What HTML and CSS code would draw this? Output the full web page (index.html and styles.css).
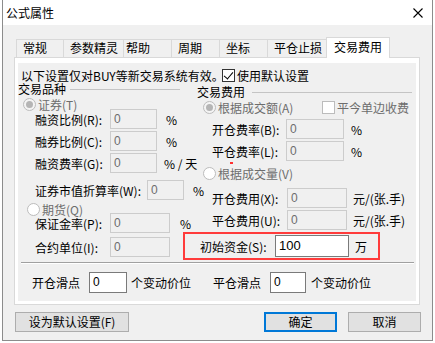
FILE: index.html
```html
<!DOCTYPE html>
<html lang="zh-CN">

<head>
    <meta charset="UTF-8">
    <title>公式属性</title>
    <link rel="stylesheet" href="styles.css">
</head>

<body>
    <div class="window">
        <div class="titlebar">
            <span class="title">公式属性</span>
            <svg class="close" width="10" height="10" viewBox="0 0 10 10">
                <path d="M0.5 0.5 L9.5 9.5 M9.5 0.5 L0.5 9.5" stroke="#000" stroke-width="1.1" fill="none" />
            </svg>
        </div>

        <div class="dialog">
            <div class="tabs">
                <div class="tab" style="width:48px">常规</div>
                <div class="tab" style="width:61px">参数精灵</div>
                <div class="tab tab-tight" style="width:49px">帮助</div>
                <div class="tab" style="width:49px">周期</div>
                <div class="tab" style="width:49px">坐标</div>
                <div class="tab" style="width:60px">平仓止损</div>
                <div class="tab active" style="width:64px">交易费用</div>
            </div>

            <div class="panel">
                <div class="page">
                    <div class="note-row">
                        <span class="note-text">以下设置仅对BUY等新交易系统有效。</span>
                        <span class="check checked"></span>
                        <span>使用默认设置</span>
                    </div>

                    <div class="cols">
                        <!-- 交易品种 -->
                        <div class="col-left">
                            <div class="legend">
                                <span>交易品种</span>
                                <span class="legend-line"></span>
                            </div>
                            <div class="radio-row first">
                                <span class="radio on"></span>
                                <span class="off-text">证券(T)</span>
                            </div>
                            <div class="field gap2">
                                <span class="lbl" style="width:75px">融资比例(R):</span>
                                <span class="box dis" style="width:47px">0</span>
                                <span class="unit" style="margin-left:9px">%</span>
                            </div>
                            <div class="field gap2">
                                <span class="lbl" style="width:75px">融券比例(C):</span>
                                <span class="box dis" style="width:47px">0</span>
                                <span class="unit" style="margin-left:9px">%</span>
                            </div>
                            <div class="field gap7">
                                <span class="lbl" style="width:75px">融资费率(G):</span>
                                <span class="box dis" style="width:47px">0</span>
                                <span class="unit" style="margin-left:7px">% / 天</span>
                            </div>
                            <div class="field">
                                <span class="lbl" style="width:112px">证券市值折算率(W):</span>
                                <span class="box dis" style="width:37px">0</span>
                                <span class="unit" style="margin-left:9px">%</span>
                            </div>
                            <div class="radio-row second">
                                <span class="radio"></span>
                                <span class="off-text">期货(Q)</span>
                            </div>
                            <div class="field gap4">
                                <span class="lbl" style="width:75px">保证金率(P):</span>
                                <span class="box dis" style="width:60px">0</span>
                                <span class="unit" style="margin-left:10px">%</span>
                            </div>
                            <div class="field">
                                <span class="lbl" style="width:75px">合约单位(I):</span>
                                <span class="box dis" style="width:60px">0</span>
                            </div>
                        </div>

                        <!-- 交易费用 -->
                        <div class="col-right">
                            <div class="legend">
                                <span>交易费用</span>
                                <span class="legend-line"></span>
                            </div>
                            <div class="radio-row">
                                <span class="radio on"></span>
                                <span class="off-text radio-label">根据成交额(A)</span>
                                <span class="check dis"></span>
                                <span class="off-text">平今单边收费</span>
                            </div>
                            <div class="field">
                                <span class="lbl" style="width:74px">开仓费率(B):</span>
                                <span class="box dis" style="width:58px">0</span>
                                <span class="unit" style="margin-left:7px">%</span>
                            </div>
                            <div class="field">
                                <span class="lbl" style="width:74px">平仓费率(L):</span>
                                <span class="box dis" style="width:58px">0</span>
                                <span class="unit" style="margin-left:7px">%</span>
                            </div>
                            <div class="red-mark"></div>
                            <div class="radio-row">
                                <span class="radio"></span>
                                <span class="off-text">根据成交量(V)</span>
                            </div>
                            <div class="field">
                                <span class="lbl" style="width:75px">开仓费用(X):</span>
                                <span class="box dis" style="width:60px">0</span>
                                <span class="unit" style="margin-left:6px">元/(张.手)</span>
                            </div>
                            <div class="field">
                                <span class="lbl" style="width:75px">平仓费用(U):</span>
                                <span class="box dis" style="width:60px">0</span>
                                <span class="unit" style="margin-left:6px">元/(张.手)</span>
                            </div>
                            <div class="capital">
                                <span class="lbl" style="width:75px">初始资金(S):</span>
                                <span class="box big" style="width:74px">100</span>
                                <span class="unit" style="margin-left:6px">万</span>
                            </div>
                        </div>
                    </div>

                    <div class="sep"></div>

                    <div class="slip-row">
                        <span style="width:57px">开仓滑点</span>
                        <span class="box" style="width:38px">0</span>
                        <span class="unit" style="margin-left:4px; width:82px">个变动价位</span>
                        <span style="width:57px">平仓滑点</span>
                        <span class="box" style="width:36px">0</span>
                        <span class="unit" style="margin-left:5px">个变动价位</span>
                    </div>
                </div>
            </div>

            <div class="buttons">
                <div class="btn" style="width:114px">设为默认设置(F)</div>
                <div class="btn default">确定</div>
                <div class="btn cancel">取消</div>
            </div>
        </div>
    </div>
</body>

</html>
```

FILE: styles.css
```css
* {
    box-sizing: border-box;
}

body {
    margin: 0;
    background-color: #fff;
    font-family: "Noto Sans CJK SC", "Liberation Sans", sans-serif;
    font-size: 12px;
    line-height: 13px;
    color: #000;
}

.window {
    margin-left: 2px;
    width: 431px;
    height: 341px;
    border: 1px solid #8c8c8c;
    border-top: none;
    background-color: #f0f0f0;
    display: flex;
    flex-direction: column;
}

.titlebar {
    height: 25px;
    flex-shrink: 0;
    background-color: #fff;
    display: flex;
    align-items: center;
    justify-content: space-between;
    padding: 0 9px 0 3px;
}

.title {
    font-size: 12px;
    line-height: 14px;
}

.dialog {
    flex: 1;
    display: flex;
    flex-direction: column;
}

/* tabs */
.tabs {
    display: flex;
    align-items: flex-end;
    height: 20px;
    margin: 12px 0 0 13px;
}

.tab {
    height: 18px;
    border: 1px solid #d9d9d9;
    border-bottom: none;
    margin-right: -1px;
    padding-left: 6px;
    font-size: 12px;
    line-height: 16px;
    background-color: #f0f0f0;
    white-space: nowrap;
}

.tab-tight {
    padding-left: 2px;
}

.tab.active {
    height: 21px;
    margin-bottom: -1px;
    padding-left: 7px;
    line-height: 18px;
    background-color: #fff;
    position: relative;
    z-index: 1;
}

.panel {
    margin-left: 11px;
    width: 406px;
    height: 248px;
    border: 1px solid #d9d9d9;
    background-color: #fff;
    padding: 5px 3px 3px 3px;
}

.page {
    height: 100%;
    background-color: #f0f0f0;
    display: flex;
    flex-direction: column;
}

.note-row {
    margin-top: 4px;
    height: 16px;
    padding-left: 3px;
    display: flex;
    align-items: center;
    white-space: nowrap;
}

.note-text {
    width: 201px;
}

/* check boxes and radios */
.check {
    width: 13px;
    height: 13px;
    border: 1px solid #333;
    background-color: #fff;
    margin-right: 2px;
    flex-shrink: 0;
    position: relative;
}

.check.checked::after {
    content: "";
    position: absolute;
    left: 3px;
    top: 0px;
    width: 4px;
    height: 8px;
    border: solid #000;
    border-width: 0 1.5px 1.5px 0;
    transform: rotate(40deg);
}

.check.dis {
    border-color: #bcbcbc;
    background-color: #fff;
}

.radio {
    width: 13px;
    height: 13px;
    border: 1px solid #bcbcbc;
    border-radius: 50%;
    background-color: #fff;
    margin-right: 2px;
    flex-shrink: 0;
    display: flex;
    align-items: center;
    justify-content: center;
}

.radio.on {
    background-color: #f4f4f4;
}

.radio.on::after {
    content: "";
    width: 7px;
    height: 7px;
    border-radius: 50%;
    background-color: #b5b5b5;
}

.off-text {
    color: #6d6d6d;
}

/* columns */
.cols {
    display: flex;
}

.col-left {
    width: 165px;
    display: flex;
    flex-direction: column;
}

.col-right {
    width: 232px;
    display: flex;
    flex-direction: column;
}

.legend {
    height: 12px;
    display: flex;
    align-items: center;
    line-height: 12px;
    white-space: nowrap;
}

.legend-line {
    flex: 1;
    height: 1px;
    background-color: #c4c4c4;
    margin: 0 3px 0 4px;
}

.col-right .legend {
    margin-top: 3px;
    padding-left: 14px;
}

.col-right .legend-line {
    margin-left: 7px;
}

.radio-row {
    height: 16px;
    margin-top: 1px;
    display: flex;
    align-items: center;
    white-space: nowrap;
}

.col-left .radio-row {
    padding-left: 5px;
}

.col-left .radio-row.first {
    margin-bottom: -3px;
}

.col-left .radio-row.second {
    padding-left: 9px;
    margin-bottom: -4px;
}

.col-right .radio-row {
    padding-left: 20px;
}

.radio-label {
    width: 104px;
}

.field {
    height: 20px;
    display: flex;
    align-items: center;
    white-space: nowrap;
}

.col-left .field {
    padding-left: 17px;
}

.col-right .field {
    padding-left: 29px;
    margin-top: 2px;
}

.col-right .radio-row + .field {
    margin-top: 4px;
}

.col-right .radio-row ~ .radio-row + .field {
    margin-top: 7px;
}

.col-right .field + .field + .capital {
    margin-top: 2px;
}

.gap2 {
    margin-bottom: 2px;
}

.gap4 {
    margin-bottom: 4px;
}

.gap7 {
    margin-bottom: 7px;
}

.lbl {
    flex-shrink: 0;
}

.box {
    height: 20px;
    border: 1px solid #7a7a7a;
    background-color: #fff;
    padding-left: 3px;
    font-family: "Liberation Sans", Arial, sans-serif;
    font-size: 12px;
    line-height: 18px;
    flex-shrink: 0;
}

.box.dis {
    border-color: #cccccc;
    background-color: #f0f0f0;
    color: #6d6d6d;
}

.box.big {
    height: 22px;
    line-height: 20px;
    font-size: 13px;
}

.unit {
    flex-shrink: 0;
}

.red-mark {
    width: 3px;
    height: 2px;
    margin: 1px 0 0 47px;
    background-color: #ff3030;
}

.capital {
    margin-top: 2px;
    width: 197px;
    height: 28px;
    border: 2px solid #ff3b3b;
    padding-left: 15px;
    display: flex;
    align-items: center;
    white-space: nowrap;
}

.sep {
    margin: 2px 2px 0 3px;
    height: 2px;
    border-top: 1px solid #a0a0a0;
    border-bottom: 1px solid #fff;
}

.slip-row {
    margin-top: 8px;
    height: 21px;
    padding-left: 14px;
    display: flex;
    align-items: center;
    white-space: nowrap;
}

.slip-row span {
    flex-shrink: 0;
}

.slip-row .box {
    height: 21px;
    line-height: 19px;
}

/* bottom buttons */
.buttons {
    margin: 7px 0 0 12px;
    display: flex;
}

.btn {
    height: 20px;
    border: 1px solid #adadad;
    background-color: #e1e1e1;
    text-align: center;
    line-height: 18px;
    white-space: nowrap;
}

.btn.default {
    width: 73px;
    margin-left: 135px;
    border: 2px solid #0078d7;
    line-height: 16px;
}

.btn.cancel {
    width: 73px;
    margin-left: 11px;
}
```
